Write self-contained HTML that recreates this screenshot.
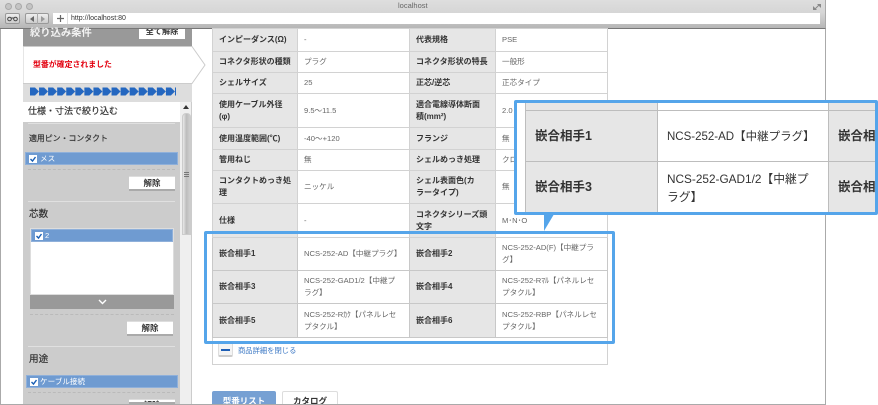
<!DOCTYPE html>
<html lang="ja"><head><meta charset="utf-8"><title>localhost</title>
<style>
html,body{margin:0;padding:0;background:#fff}
body{width:878px;height:405px;position:relative;overflow:hidden;font-family:"Liberation Sans","Noto Sans CJK JP",sans-serif;color:#333}
.a{position:absolute;box-sizing:border-box}
.t{position:absolute;white-space:nowrap}
.btn{position:absolute;box-sizing:border-box;background:#fff;border-bottom:2px solid #aaa;border-top:1px solid #ddd;font-size:8.5px;font-weight:bold;text-align:center;color:#333}
.row{position:absolute;background:#6f9bd1;color:#fff;font-size:7.6px;box-sizing:border-box;height:13px;line-height:12px;padding-left:14px;border:1px solid #8fb0da;white-space:nowrap}
.row svg{position:absolute;left:3px;top:2px}
.dash{position:absolute;height:0;border-top:1px dashed #bababa}
.sol{position:absolute;height:1px;background:#e0e0e0}
table.m{position:absolute;left:212px;top:28px;width:395px;border-collapse:collapse;table-layout:fixed;font-size:7.6px;line-height:12px}
table.m td{border:1px solid #d2d2d2;padding:0 6px;vertical-align:middle;color:#666;background:#fff;overflow:hidden;white-space:nowrap}
table.m td.l{background:#e6e6e6;color:#333;font-weight:bold;font-size:8px;padding-left:6px}
table.m tr.b td{border-color:#c8c8c8}
.c{position:absolute;box-sizing:border-box}
</style></head><body>

<!-- page frame -->
<div class="a" style="left:0;top:28px;width:1px;height:377px;background:#aaa"></div>
<div class="a" style="left:825px;top:28px;width:1px;height:377px;background:#aaa"></div>
<div class="a" style="left:0;top:404px;width:826px;height:1px;background:#aaa"></div>

<!-- browser chrome -->
<div class="a" style="left:0;top:0;width:826px;height:29px;background:linear-gradient(#dedede,#d6d6d6 45%,#b6b6b6);border-bottom:1px solid #777;border-right:1px solid #aaa"></div>
<div class="a" style="left:5px;top:3px;width:7px;height:7px;border-radius:50%;background:#c4c4c4;border:1px solid #a8a8a8"></div>
<div class="a" style="left:15px;top:3px;width:7px;height:7px;border-radius:50%;background:#c4c4c4;border:1px solid #a8a8a8"></div>
<div class="a" style="left:26px;top:3px;width:7px;height:7px;border-radius:50%;background:#c4c4c4;border:1px solid #a8a8a8"></div>
<div class="t" style="left:398px;top:0;font-size:7.5px;line-height:11px;color:#666">localhost</div>
<div class="a" style="left:5px;top:13px;width:15px;height:11px;border:1px solid #999;border-radius:2px;background:linear-gradient(#eee,#ccc)"></div>
<svg class="a" style="left:7px;top:16px" width="11" height="6"><circle cx="2.500" cy="3" r="1.800" fill="none" stroke="#444"/><circle cx="8.500" cy="3" r="1.800" fill="none" stroke="#444"/><path d="M4 2h3" stroke="#444"/></svg>
<div class="a" style="left:25px;top:13px;width:24px;height:11px;border:1px solid #999;border-radius:2px;background:linear-gradient(#eee,#ccc)"></div>
<div class="a" style="left:37px;top:13px;width:1px;height:11px;background:#aaa"></div>
<svg class="a" style="left:29px;top:16px" width="18" height="6"><path d="M1 3l4-3v6z" fill="#666"/><path d="M12 0l4 3-4 3z" fill="#999"/></svg>
<div class="a" style="left:53px;top:13px;width:767px;height:11px;background:#fff"></div>
<svg class="a" style="left:57px;top:15px" width="7" height="7"><path d="M3.500 0v7M0 3.500h7" stroke="#666" stroke-width="1.200"/></svg>
<div class="a" style="left:67px;top:13px;width:1px;height:11px;background:#ddd"></div>
<div class="t" style="left:71px;top:14px;font-size:7px;line-height:10px;color:#333">http://localhost:80</div>
<svg class="a" style="left:813px;top:3px" width="8" height="8"><path d="M4 1h4v4zM0 3l4 4H0z" fill="#888"/><path d="M2 6l4-4" stroke="#888"/></svg>

<!-- sidebar -->
<div class="a" style="left:23px;top:29px;width:157px;height:375px;background:#ccc"></div>
<div class="a" style="left:180px;top:102px;width:12px;height:302px;background:#efefef;border-right:1px solid #ccc"></div>
<svg class="a" style="left:183px;top:105px" width="6" height="5"><path d="M3 0l3 4H0z" fill="#333"/></svg>
<div class="a" style="left:182px;top:113px;width:9px;height:122px;border-radius:4px 4px 0 0;background:linear-gradient(90deg,#e8e8e8,#bcbcbc 50%,#cfcfcf);border:1px solid #ccc"></div>
<div class="a" style="left:184px;top:172px;width:5px;height:5px;background:repeating-linear-gradient(#777 0 1px,transparent 1px 2px)"></div>

<div class="a" style="left:23px;top:29px;width:169px;height:18px;background:#999"></div>
<div class="t" style="left:30px;top:26px;font-size:10.3px;line-height:16px;font-weight:bold;color:#f2f2f2">絞り込み条件</div>
<div class="a" style="left:139px;top:29px;width:46px;height:10px;background:#fff;font-size:8.2px;line-height:5px;font-weight:bold;text-align:center;overflow:hidden;color:#333">全て解除</div>

<div class="a" style="left:23px;top:83px;width:169px;height:19px;background:#ddd"></div>
<svg class="a" style="left:23px;top:46px" width="183" height="38"><path d="M0 .5H169L182 19 169 37.500H0z" fill="#fff" stroke="#ccc"/></svg>
<div class="t" style="left:33px;top:59px;font-size:7.9px;line-height:12px;font-weight:bold;color:#e3000f">型番が確定されました</div>

<svg class="a" style="left:30px;top:87px" width="146" height="9"><defs><pattern id="p" width="9.060" height="9" patternUnits="userSpaceOnUse"><path d="M0 .5h5L9 4.500 5 8.500H0z" fill="#2467c0"/></pattern></defs><rect width="146" height="9" fill="url(#p)"/></svg>

<div class="a" style="left:23px;top:102px;width:157px;height:20px;background:#fff"></div>
<div class="t" style="left:28px;top:104px;font-size:9px;line-height:15px;color:#333;-webkit-text-stroke:.2px #333">仕様・寸法で絞り込む</div>
<div class="sol" style="left:28px;top:123px;width:147px"></div>

<div class="t" style="left:29px;top:132px;font-size:7.9px;line-height:13px;color:#333;-webkit-text-stroke:.2px #333">適用ピン・コンタクト</div>
<div class="row" style="left:25px;top:152px;width:153px"><svg width="8" height="8"><rect width="8" height="8" fill="#fff"/><path d="M1.500 4l2 2 3-4" fill="none" stroke="#1a5fb4" stroke-width="1.400"/></svg>メス</div>
<div class="dash" style="left:28px;top:169px;width:147px"></div>
<div class="btn" style="left:129px;top:176px;width:46px;height:15px;line-height:12px">解除</div>
<div class="sol" style="left:28px;top:201px;width:147px"></div>

<div class="t" style="left:29px;top:208px;font-size:9.6px;line-height:14px;color:#333;-webkit-text-stroke:.2px #333">芯数</div>
<div class="a" style="left:30px;top:228px;width:144px;height:67px;background:#fff;border:1px solid #ddd"></div>
<div class="row" style="left:31px;top:229px;width:142px;padding-left:13px"><svg width="8" height="8"><rect width="8" height="8" fill="#fff"/><path d="M1.500 4l2 2 3-4" fill="none" stroke="#1a5fb4" stroke-width="1.400"/></svg>2</div>
<div class="a" style="left:30px;top:295px;width:144px;height:14px;background:#999"></div>
<svg class="a" style="left:98px;top:299px" width="9" height="6"><path d="M1 1l3.500 3.500L8 1" fill="none" stroke="#fff" stroke-width="1.400"/></svg>
<div class="dash" style="left:30px;top:314px;width:144px"></div>
<div class="btn" style="left:127px;top:321px;width:46px;height:15px;line-height:12px">解除</div>
<div class="sol" style="left:28px;top:346px;width:147px"></div>

<div class="t" style="left:29px;top:353px;font-size:9.6px;line-height:14px;color:#333;-webkit-text-stroke:.2px #333">用途</div>
<div class="row" style="left:26px;top:375px;width:152px;padding-left:13px"><svg width="8" height="8"><rect width="8" height="8" fill="#fff"/><path d="M1.500 4l2 2 3-4" fill="none" stroke="#1a5fb4" stroke-width="1.400"/></svg>ケーブル接続</div>
<div class="dash" style="left:28px;top:392px;width:147px"></div>
<div class="btn" style="left:129px;top:399px;width:46px;height:5px;line-height:10px;overflow:hidden">解除</div>

<!-- outer product box -->
<div class="a" style="left:212px;top:337px;width:396px;height:28px;border:1px solid #d2d2d2;border-top:0"></div>

<!-- main table -->
<table class="m">
<colgroup><col style="width:85px"><col style="width:112px"><col style="width:86px"><col style="width:112px"></colgroup>
<tr style="height:23px"><td class="l">インピーダンス(Ω)</td><td>-</td><td class="l">代表規格</td><td>PSE</td></tr>
<tr style="height:21px"><td class="l">コネクタ形状の種類</td><td>プラグ</td><td class="l">コネクタ形状の特長</td><td>一般形</td></tr>
<tr style="height:21px"><td class="l">シェルサイズ</td><td>25</td><td class="l">正芯/逆芯</td><td>正芯タイプ</td></tr>
<tr style="height:34px"><td class="l">使用ケーブル外径<br>(φ)</td><td>9.5～11.5</td><td class="l">適合電線導体断面<br>積(mm²)</td><td>2.0</td></tr>
<tr style="height:22px"><td class="l">使用温度範囲(℃)</td><td>-40～+120</td><td class="l">フランジ</td><td>無</td></tr>
<tr style="height:21px"><td class="l">管用ねじ</td><td>無</td><td class="l">シェルめっき処理</td><td>クロム</td></tr>
<tr style="height:33px"><td class="l">コンタクトめっき処<br>理</td><td>ニッケル</td><td class="l">シェル表面色(カ<br>ラータイプ)</td><td>無</td></tr>
<tr style="height:34px"><td class="l">仕様</td><td>-</td><td class="l">コネクタシリーズ頭<br>文字</td><td>M･N･O</td></tr>
<tr class="b" style="height:33px"><td class="l">嵌合相手1</td><td>NCS-252-AD【中継プラグ】</td><td class="l">嵌合相手2</td><td>NCS-252-AD(F)【中継プラ<br>グ】</td></tr>
<tr class="b" style="height:33px"><td class="l">嵌合相手3</td><td>NCS-252-GAD1/2【中継プ<br>ラグ】</td><td class="l">嵌合相手4</td><td>NCS-252-Rﾏﾙ【パネルレセ<br>プタクル】</td></tr>
<tr class="b" style="height:34px"><td class="l">嵌合相手5</td><td>NCS-252-Rｶｸ【パネルレセ<br>プタクル】</td><td class="l">嵌合相手6</td><td>NCS-252-RBP【パネルレセ<br>プタクル】</td></tr>
</table>

<!-- close details -->
<div class="a" style="left:218px;top:343px;width:15px;height:14px;background:#f4f4f4;border:1px solid #ddd;border-bottom:2px solid #ccc;border-radius:0 0 2px 2px"></div>
<div class="a" style="left:221px;top:349px;width:9px;height:2px;background:#1f5fb5"></div>
<div class="t" style="left:238px;top:345px;font-size:7.3px;line-height:12px;color:#3a77c4">商品詳細を閉じる</div>

<!-- bottom buttons -->
<div class="a" style="left:212px;top:391px;width:64px;height:13px;background:#76a0d3;border-radius:2px 2px 0 0;color:#fff;font-size:8.5px;font-weight:bold;line-height:20px;text-align:center;overflow:hidden">型番リスト</div>
<div class="a" style="left:282px;top:391px;width:56px;height:13px;background:#fff;border:1px solid #ddd;border-bottom:0;border-radius:2px 2px 0 0;color:#333;font-size:8.5px;font-weight:bold;line-height:19px;text-align:center;overflow:hidden">カタログ</div>

<!-- highlight -->
<div class="a" style="left:204px;top:231px;width:411px;height:113px;border:3px solid #55a5ea;border-radius:2px"></div>

<!-- callout -->
<svg class="a" style="left:540px;top:212px" width="16" height="20"><path d="M4 0h9.500v3L4 19z" fill="#55a5ea"/></svg>
<div class="a" style="left:514px;top:100px;width:364px;height:115px;background:#fff;border:3px solid #55a5ea;border-radius:2px;overflow:hidden">
<div class="c" style="left:8px;top:0;width:132px;height:109px;background:#e6e6e6"></div>
<div class="c" style="left:311px;top:0;width:50px;height:109px;background:#e6e6e6"></div>
<div class="c" style="left:8px;top:7px;width:353px;height:1px;background:#bdbdbd"></div>
<div class="c" style="left:8px;top:58px;width:353px;height:1px;background:#bdbdbd"></div>
<div class="c" style="left:140px;top:0;width:1px;height:109px;background:#bdbdbd"></div>
<div class="c" style="left:311px;top:0;width:1px;height:109px;background:#bdbdbd"></div>
<div class="c" style="left:8px;top:0;width:1px;height:109px;background:#bdbdbd"></div>
<div class="t" style="left:18px;top:24px;font-size:12.5px;line-height:18px;font-weight:bold;color:#333">嵌合相手1</div>
<div class="t" style="left:18px;top:75px;font-size:12.5px;line-height:18px;font-weight:bold;color:#333">嵌合相手3</div>
<div class="t" style="left:150px;top:25px;font-size:11.5px;line-height:18px;color:#333">NCS-252-AD【中継プラグ】</div>
<div class="t" style="left:150px;top:67px;font-size:11.8px;line-height:18px;color:#333">NCS-252-GAD1/2【中継プ<br>ラグ】</div>
<div class="t" style="left:321px;top:24px;font-size:12.5px;line-height:18px;font-weight:bold;color:#333">嵌合相手2</div>
<div class="t" style="left:321px;top:75px;font-size:12.5px;line-height:18px;font-weight:bold;color:#333">嵌合相手4</div>
</div>

</body></html>
